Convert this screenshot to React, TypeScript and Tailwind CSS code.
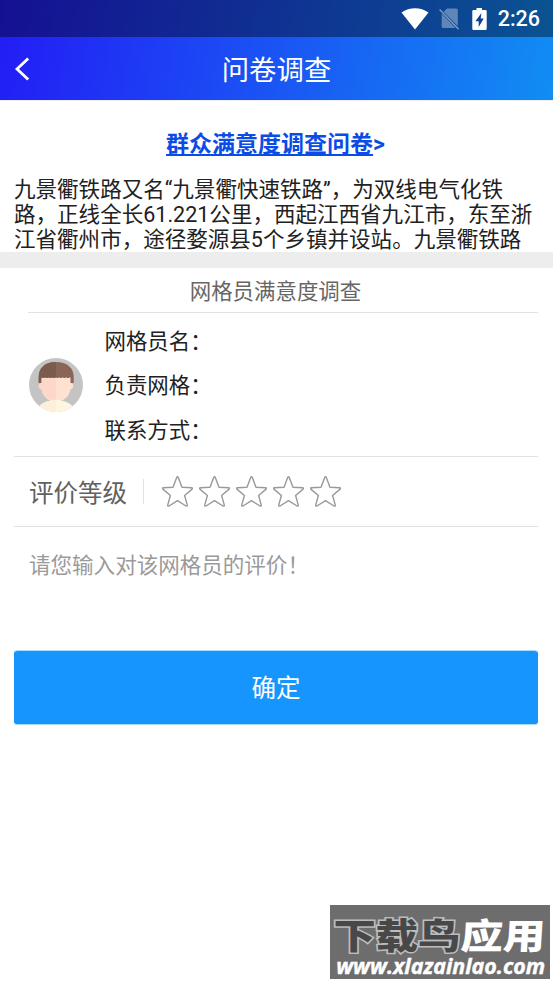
const FIELDS = ["网格员名：", "负责网格：", "联系方式："];

const INTRO_LINES = [
  "九景衢铁路又名“九景衢快速铁路”，为双线电气化铁",
  "路，正线全长61.221公里，西起江西省九江市，东至浙",
  "江省衢州市，途径婺源县5个乡镇并设站。九景衢铁路",
];

function StatusBar() {
  return (
    <div className="flex h-[37px] items-center justify-end bg-black/40 pr-[13px] text-white">
      {/* Wifi */}
      <svg viewBox="0 0 28 22" className="mr-[10px] h-[22px] w-7" fill="currentColor">
        <path d="M.5 4.600C8.300-1.100 19.700-1.100 27.500 4.600L14 21.500z" />
      </svg>
      {/* No sim */}
      <svg viewBox="0 0 20 22" className="mr-[13px] h-[22px] w-5" fill="none">
        <path d="M8 .5h9.200a1.600 1.600 0 0 1 1.600 1.600v15.800L4.600 3.700zM2.700 5.400 16.500 20H4.300a1.600 1.600 0 0 1-1.600-1.600z" fill="#fff" fillOpacity=".35" />
        <path d="M.6 1.600 19.600 21.200" stroke="#fff" strokeOpacity=".45" strokeWidth="1.500" />
      </svg>
      {/* Battery */}
      <svg viewBox="0 0 15 22" className="mr-[11px] h-[22px] w-[15px]">
        <path d="M4.500 0h5.500v2H13.500a1.200 1.200 0 0 1 1.200 1.200v17.600a1.200 1.200 0 0 1-1.200 1.200h-12A1.200 1.200 0 0 1 .3 20.800V3.200A1.200 1.200 0 0 1 1.500 2h3z" fill="#fff" />
        <path d="M9.400 5 3.400 13.200h3.300v5.800l5-8.500H8.700z" fill="#0b418f" />
      </svg>
      <span className="pt-px text-[21.500px] font-medium leading-[36px]">2:26</span>
    </div>
  );
}

function Avatar() {
  return (
    <svg viewBox="0 0 54 54" className="size-[54px]">
      <defs>
        <clipPath id="frame">
          <circle cx="27" cy="27" r="27" />
        </clipPath>
        <clipPath id="leftHalf">
          <rect width="27" height="54" />
        </clipPath>
      </defs>
      <g clipPath="url(#frame)">
        <rect width="54" height="54" fill="#c4c4c4" />
        {/* Hair */}
        <path d="M27 4C16 4 9.700 10 9.700 19v6h35v-6C44.700 10 38 4 27 4z" fill="#8a6656" />
        {/* Face and ears */}
        <path d="M12.500 19.500h29V25c3.800 0 3.500 6 0 6.500C40.500 38 35 43.500 27 43.500S13.500 38 12.500 31.500c-3.500-.5-3.800-6.500 0-6.500z" fill="#fee1d1" />
        <path d="M13.500 19.500h27" stroke="#8a6656" strokeWidth="1" strokeDasharray="2 1.500" />
        {/* Shirt */}
        <path d="M8 51c5-6.500 11-9 19-9s14 2.500 19 9v5H8z" fill="#fff6e0" />
        <g clipPath="url(#leftHalf)">
          <path d="M27 4C16 4 9.700 10 9.700 19v6h2.800v-5.500H27z" fill="#7b5b4d" />
          <path d="M12.500 20.200H27V42c-6 0-13.500-4-14.500-10.500-3.500-.5-3.800-6.500 0-6.500z" fill="#fdd8c9" />
          <path d="M8 51c5-6.500 11-9 19-9v14H8z" fill="#fdf0d8" />
        </g>
      </g>
    </svg>
  );
}

function Star() {
  return (
    <svg viewBox="0 0 31 31" className="h-[31px] w-[31px]" fill="none" stroke="#999" strokeWidth="1.400" strokeLinejoin="round">
      <path d="M14.700 1.400q.8-1.300 1.600 0l3.700 9.800 9.600.5q1.500.3.500 1.400l-7.500 6.400 2.700 9.600q.1 1.500-1.300.9L15.500 24.700 7 30q-1.400.6-1.300-.9l2.700-9.600L.9 13.100q-1-1.100.5-1.400l9.600-.5z" />
    </svg>
  );
}

function Watermark() {
  return (
    <div className="absolute left-[330px] top-[905px] h-[74px] w-[220px] overflow-hidden bg-[#6d6d6d]">
      <div className="mt-[6px] flex h-[45px] origin-left scale-x-[1.190] items-center whitespace-nowrap pl-[3px] font-['Noto_Sans_CJK_SC',sans-serif] text-[35.500px] font-black">
        <span className="text-[#484848] [-webkit-text-stroke:3px_#bcbcbc] [paint-order:stroke_fill]">下载鸟</span>
        <span className="-skew-x-3 text-white">应用</span>
      </div>
      <div className="h-[22px] origin-left scale-x-[1.040] whitespace-nowrap pl-[6px] font-['Open_Sans',sans-serif] text-[20.600px] font-bold italic leading-[20px] text-white [-webkit-text-stroke:0.400px_#fff]">
        www.xlazainlao.com
      </div>
    </div>
  );
}

export default function App() {
  return (
    <div className="relative flex h-[983px] w-[553px] flex-col overflow-hidden bg-white font-[Roboto,'Noto_Sans_CJK_SC',sans-serif] text-[#212121]">
      <header className="h-[100px] shrink-0 bg-linear-[100deg,#231cf5,#118df3] text-white">
        <StatusBar />
        <div className="grid h-[63px] grid-cols-[60px_1fr_60px] items-center">
          <svg viewBox="0 0 16 24" className="ml-[14px] h-6 w-4" fill="none" stroke="currentColor" strokeWidth="2.800">
            <path d="M14.200 1.500 3 12l11.200 10.500" />
          </svg>
          <h1 className="pt-[5px] text-center text-[27.400px] leading-[58px]">问卷调查</h1>
        </div>
      </header>

      <section className="h-[152px] shrink-0 overflow-hidden border-t border-[#f0f0f0] pr-[2px]">
        <div className="mt-[28px] h-8 text-center text-[23px] font-bold leading-8 text-[#0b4ce6]">
          <span className="underline decoration-[1.500px] underline-offset-[2px]">群众满意度调查问卷</span>&gt;
        </div>
        <div className="mt-[16px] pl-[14px] text-[21.540px] leading-[25.200px]">
          {INTRO_LINES.map((line) => (
            <p key={line} className="whitespace-nowrap">{line}</p>
          ))}
        </div>
      </section>
      <div className="h-4 shrink-0 bg-[#ededed]" />

      <section className="pl-[14px] pr-[15px]">
        <h2 className="ml-[14px] h-[45px] border-b border-[#e2e2e2] pr-[15px] pt-[2px] text-center text-[21.450px] leading-[43px] text-[#666]">
          网格员满意度调查
        </h2>
        <div className="flex h-[144px] items-center border-b border-[#e2e2e2] pl-[15px]">
          <Avatar />
          <div className="ml-[21.500px] pt-[4px] text-[21.450px] leading-[44.500px]">
            {FIELDS.map((field) => (
              <p key={field}>{field}</p>
            ))}
          </div>
        </div>
        <div className="flex h-[70px] items-center border-b border-[#e2e2e2] pl-[15px]">
          <span className="pt-[5px] text-[24.500px] text-[#616161]">评价等级</span>
          <span className="ml-4 h-[25px] w-px bg-[#e2e2e2]" />
          <div className="ml-[18px] flex gap-[6px]">
            {[1, 2, 3, 4, 5].map((n) => (
              <Star key={n} />
            ))}
          </div>
        </div>
        <div className="h-[123px] pl-[15px] pt-[22px] text-[21.540px] leading-[34px] text-[#9a9a9a]">
          请您输入对该网格员的评价！
        </div>
        <button className="block h-[75px] w-full rounded-[3px] border-y border-[#a9ddff] bg-[#1795ff] bg-clip-padding pt-[4px] text-[24.500px] text-white">
          确定
        </button>
      </section>

      <Watermark />
    </div>
  );
}
